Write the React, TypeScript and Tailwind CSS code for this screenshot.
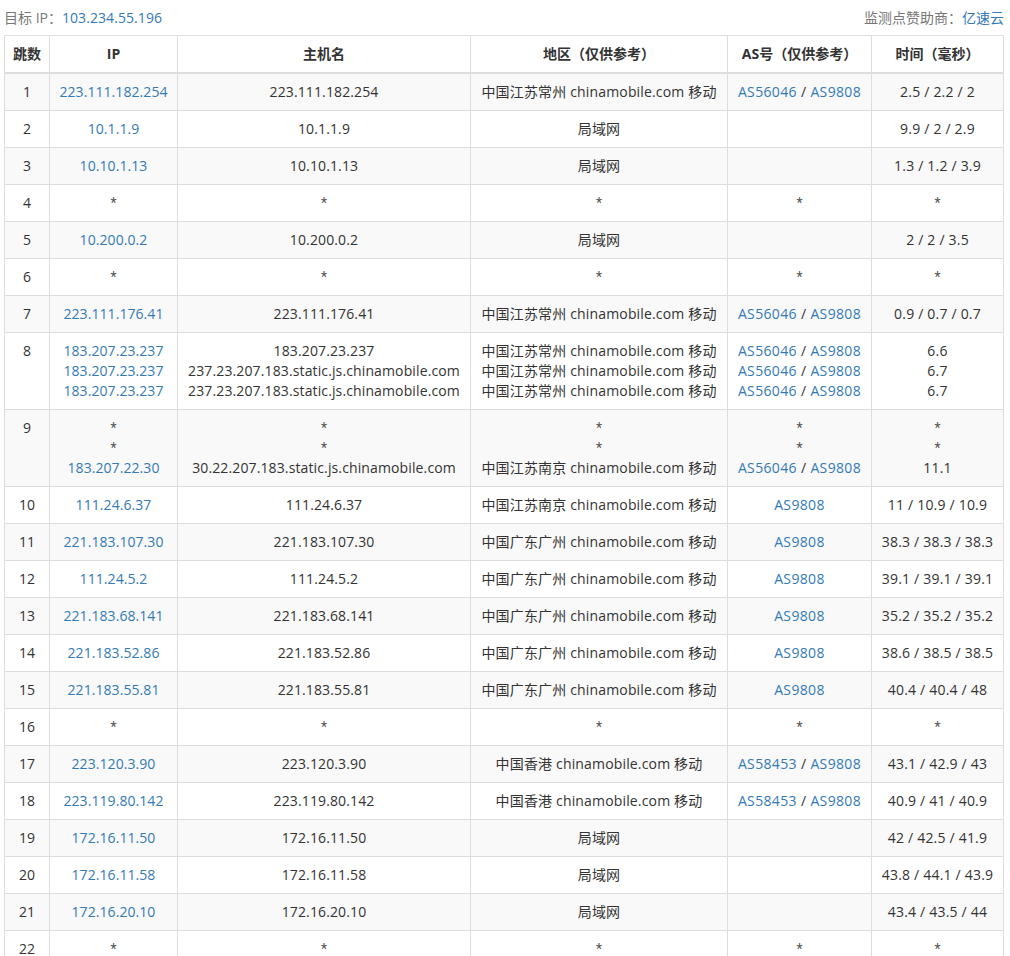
const AS1 = ['AS56046', 'AS9808']
const AS2 = ['AS58453', 'AS9808']
const AS3 = ['AS9808']

const CZ = '中国江苏常州 chinamobile.com 移动'
const NJ = '中国江苏南京 chinamobile.com 移动'
const GZ = '中国广东广州 chinamobile.com 移动'
const HK = '中国香港 chinamobile.com 移动'
const LAN = '局域网'

type Hop = { ip: string; host?: string; area: string; as: string[] | null; time: string }

const star: Hop = { ip: '*', host: '*', area: '*', as: null, time: '*' }

const rows: Hop[][] = [
  [{ ip: '223.111.182.254', area: CZ, as: AS1, time: '2.5 / 2.2 / 2' }],
  [{ ip: '10.1.1.9', area: LAN, as: [], time: '9.9 / 2 / 2.9' }],
  [{ ip: '10.10.1.13', area: LAN, as: [], time: '1.3 / 1.2 / 3.9' }],
  [star],
  [{ ip: '10.200.0.2', area: LAN, as: [], time: '2 / 2 / 3.5' }],
  [star],
  [{ ip: '223.111.176.41', area: CZ, as: AS1, time: '0.9 / 0.7 / 0.7' }],
  [
    { ip: '183.207.23.237', area: CZ, as: AS1, time: '6.6' },
    { ip: '183.207.23.237', host: '237.23.207.183.static.js.chinamobile.com', area: CZ, as: AS1, time: '6.7' },
    { ip: '183.207.23.237', host: '237.23.207.183.static.js.chinamobile.com', area: CZ, as: AS1, time: '6.7' },
  ],
  [
    star,
    star,
    { ip: '183.207.22.30', host: '30.22.207.183.static.js.chinamobile.com', area: NJ, as: AS1, time: '11.1' },
  ],
  [{ ip: '111.24.6.37', area: NJ, as: AS3, time: '11 / 10.9 / 10.9' }],
  [{ ip: '221.183.107.30', area: GZ, as: AS3, time: '38.3 / 38.3 / 38.3' }],
  [{ ip: '111.24.5.2', area: GZ, as: AS3, time: '39.1 / 39.1 / 39.1' }],
  [{ ip: '221.183.68.141', area: GZ, as: AS3, time: '35.2 / 35.2 / 35.2' }],
  [{ ip: '221.183.52.86', area: GZ, as: AS3, time: '38.6 / 38.5 / 38.5' }],
  [{ ip: '221.183.55.81', area: GZ, as: AS3, time: '40.4 / 40.4 / 48' }],
  [star],
  [{ ip: '223.120.3.90', area: HK, as: AS2, time: '43.1 / 42.9 / 43' }],
  [{ ip: '223.119.80.142', area: HK, as: AS2, time: '40.9 / 41 / 40.9' }],
  [{ ip: '172.16.11.50', area: LAN, as: [], time: '42 / 42.5 / 41.9' }],
  [{ ip: '172.16.11.58', area: LAN, as: [], time: '43.8 / 44.1 / 43.9' }],
  [{ ip: '172.16.20.10', area: LAN, as: [], time: '43.4 / 43.5 / 44' }],
  [star],
]

const th = 'border border-[#dddddd] border-b-2 p-2 text-center align-bottom font-bold leading-5'
const td = 'border border-[#dddddd] p-2 px-0 text-center align-top leading-5'
const link = 'text-[#337ab7]'

// the asterisk of the reference is thinner than Open Sans'
function Cell({ text }: { text: string }) {
  if (text === '*') return <div className="font-['Roboto'] text-[#555555]">*</div>
  return <div>{text}</div>
}

function AsCell({ as }: { as: string[] | null }) {
  if (as === null) return <Cell text="*" />
  return (
    <div className="tracking-[0.35px]">
      {as.map((a, i) => (
        <span key={a}>
          {i > 0 && ' / '}
          <a className={link}>{a}</a>
        </span>
      ))}
    </div>
  )
}

export default function App() {
  return (
    <div
      className="h-[956px] w-[1010px] overflow-hidden bg-white pl-1 text-[14px] text-[#333333]"
      style={{ fontFamily: '"Open Sans", "Noto Sans CJK SC", sans-serif' }}
    >
      <div className="flex h-[35px] w-[1000px] items-center justify-between pb-[1px] text-[#777777]">
        <div>
          目标 IP：<a className={link + ' tracking-[0.07px]'}>103.234.55.196</a>
        </div>
        <div>
          监测点赞助商：<a className={link}>亿速云</a>
        </div>
      </div>
      <table className="w-[999px] table-fixed border-collapse">
        <colgroup>
          <col className="w-[45px]" />
          <col className="w-[128px]" />
          <col className="w-[293px]" />
          <col className="w-[257px]" />
          <col className="w-[144px]" />
          <col className="w-[132px]" />
        </colgroup>
        <thead>
          <tr>
            <th className={th + ' px-0'}>跳数</th>
            <th className={th}>IP</th>
            <th className={th}>主机名</th>
            <th className={th}>地区（仅供参考）</th>
            <th className={th + ' px-0'}>AS号（仅供参考）</th>
            <th className={th}>时间（毫秒）</th>
          </tr>
        </thead>
        <tbody>
          {rows.map((lines, i) => (
            <tr key={i} className={i % 2 === 0 ? 'bg-[#f9f9f9]' : ''}>
              <td className={td}>{i + 1}</td>
              <td className={td + ' tracking-[0.07px]'}>
                {lines.map((l, j) =>
                  l.ip === '*' ? (
                    <Cell key={j} text="*" />
                  ) : (
                    <div key={j}>
                      <a className={link}>{l.ip}</a>
                    </div>
                  ),
                )}
              </td>
              <td className={td + ' tracking-[0.125px]'}>
                {lines.map((l, j) => (
                  <Cell key={j} text={l.host ?? l.ip} />
                ))}
              </td>
              <td className={td + ' tracking-[0.16px]'}>
                {lines.map((l, j) => (
                  <Cell key={j} text={l.area} />
                ))}
              </td>
              <td className={td}>
                {lines.map((l, j) => (
                  <AsCell key={j} as={l.as} />
                ))}
              </td>
              <td className={td + ' tracking-[0.2px]'}>
                {lines.map((l, j) => (
                  <Cell key={j} text={l.time} />
                ))}
              </td>
            </tr>
          ))}
        </tbody>
      </table>
    </div>
  )
}
